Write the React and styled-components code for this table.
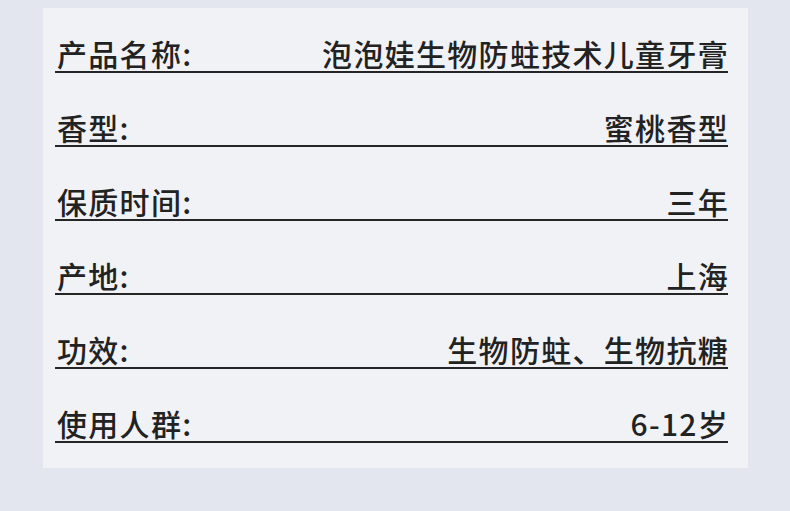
import styled, { createGlobalStyle } from "styled-components";

const GlobalStyle = createGlobalStyle`
  html, body {
    margin: 0;
    padding: 0;
    background: #e3e6ee;
  }
`;

const rows = [
  { label: "产品名称:", value: "泡泡娃生物防蛀技术儿童牙膏" },
  { label: "香型:", value: "蜜桃香型" },
  { label: "保质时间:", value: "三年" },
  { label: "产地:", value: "上海" },
  { label: "功效:", value: "生物防蛀、生物抗糖" },
  { label: "使用人群:", value: "6-12岁" },
];

const App = () => {
  return (
    <>
      <GlobalStyle />
      <Page>
        <Card>
          {rows.map((r) => (
            <Row key={r.label}>
              <Label>{r.label}</Label>
              <Value>{r.value}</Value>
            </Row>
          ))}
        </Card>
      </Page>
    </>
  );
};

export default App;

const Page = styled.div`
  width: 790px;
  height: 511px;
  padding: 8px 42px 0 43px;
  box-sizing: border-box;
  background: #e3e6ee;
`;

const Card = styled.div`
  background: #f1f2f6;
  height: 460px;
  box-sizing: border-box;
  padding: 27px 20px 0 12px;
  display: flex;
  flex-direction: column;
  gap: 36px;
`;

const Row = styled.div`
  display: flex;
  justify-content: space-between;
  align-items: flex-end;
  height: 36px;
  border-bottom: 2px solid #262626;
  font-family: "Noto Sans CJK SC", "Noto Sans", sans-serif;
  font-size: 30px;
  font-weight: 500;
  line-height: 36px;
  letter-spacing: 1.3px;
  color: #222;
`;

const Label = styled.span`
  padding-left: 2px;
`;

const Value = styled.span`
  margin-right: -1px;
`;
